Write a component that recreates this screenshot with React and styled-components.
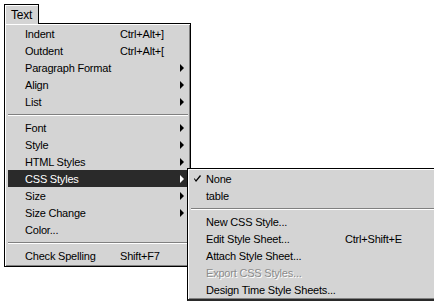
import React from 'react';
import styled, { createGlobalStyle } from 'styled-components';

const Global = createGlobalStyle`
  body {
    margin: 0;
    background: #ffffff;
    font-family: "Liberation Sans", Arial, sans-serif;
    font-size: 11px;
    letter-spacing: -0.2px;
    color: #000;
  }
`

const Page = styled.div`
  padding: 4px 0 0 4px;
  width: 434px;
  height: 307px;
  box-sizing: border-box;
`

const MenuWrap = styled.div`
  width: 187px;
  display: flex;
  flex-direction: column;
`

const Tab = styled.div`
  position: relative;
  z-index: 1;
  width: 35px;
  height: 20px;
  margin-bottom: -1px;
  box-sizing: border-box;
  background: #d4d4d4;
  border: 1px solid #000;
  border-bottom: none;
  box-shadow: inset 1px 1px #fff;
  padding: 3px 0 0 6px;
  font-size: 12px;
`

const Menu = styled.div`
  background: #d4d4d4;
  border: 1px solid #000;
  box-shadow: inset 1px 1px #fff, inset -1px -1px #808080;
  padding: 1px 2px 2px 3px;
  display: flex;
  flex-direction: column;
`

const Flyout = styled.div`
  position: absolute;
  left: 179px;
  top: -2px;
  width: 243px;
  z-index: 2;
  background: #d4d4d4;
  border: 1px solid #000;
  border-right: 2px solid #2a2a2a;
  border-bottom: 2px solid #2a2a2a;
  box-shadow: inset 1px 1px #fff, inset -1px -1px #808080;
  padding: 1px 2px 1px 3px;
  display: flex;
  flex-direction: column;
`

const Item = styled.div`
  position: relative;
  height: 17px;
  display: grid;
  grid-template-columns: ${p => p.$label}px 1fr 8px;
  align-items: center;
  padding-left: ${p => p.$indent}px;
  background: ${p => (p.$active ? '#2a2a2a' : 'transparent')};
  color: ${p => (p.$active ? '#fff' : p.$disabled ? '#8c8c8c' : '#000')};
  text-shadow: ${p => (p.$disabled ? '1px 1px 0 #fff' : 'none')};
  white-space: nowrap;
`

const Check = styled.span`
  position: absolute;
  left: 3px;
  top: 5px;
  display: flex;
`

const Arrow = styled.span`
  width: 0;
  height: 0;
  border-top: 4px solid transparent;
  border-bottom: 4px solid transparent;
  border-left: 4px solid ${p => (p.$active ? '#fff' : '#000')};
`

const Separator = styled.div`
  height: 9px;
  display: flex;
  align-items: center;
  &::after {
    content: '';
    flex: 1;
    height: 1px;
    background: #808080;
    border-bottom: 1px solid #fff;
  }
`

const mainItems = [
  { label: 'Indent', key: 'Ctrl+Alt+]' },
  { label: 'Outdent', key: 'Ctrl+Alt+[' },
  { label: 'Paragraph Format', sub: true },
  { label: 'Align', sub: true },
  { label: 'List', sub: true },
  { sep: true },
  { label: 'Font', sub: true },
  { label: 'Style', sub: true },
  { label: 'HTML Styles', sub: true },
  { label: 'CSS Styles', sub: true, active: true },
  { label: 'Size', sub: true },
  { label: 'Size Change', sub: true },
  { label: 'Color...' },
  { sep: true },
  { label: 'Check Spelling', key: 'Shift+F7' },
]

const cssItems = [
  { label: 'None', checked: true },
  { label: 'table' },
  { sep: true },
  { label: 'New CSS Style...' },
  { label: 'Edit Style Sheet...', key: 'Ctrl+Shift+E' },
  { label: 'Attach Style Sheet...' },
  { label: 'Export CSS Styles...', disabled: true },
  { label: 'Design Time Style Sheets...' },
]

const CheckMark = () => (
  <Check>
    <svg width="7" height="7" viewBox="0 0 7 7">
      <path d="M0 3 L2 5 L6 0 L7 1 L2 7 L0 4 Z" fill="#000" />
    </svg>
  </Check>
)

const SubMenu = () => (
  <Flyout>
    {cssItems.map((it, i) =>
      it.sep ? (
        <Separator key={i} />
      ) : (
        <Item key={i} $label={139} $indent={15} $disabled={it.disabled}>
          {it.checked && <CheckMark />}
          <span>{it.label}</span>
          <span>{it.key}</span>
          <span />
        </Item>
      )
    )}
  </Flyout>
)

export default function App() {
  return (
    <Page>
      <Global />
      <MenuWrap>
        <Tab>Text</Tab>
        <Menu>
          {mainItems.map((it, i) =>
            it.sep ? (
              <Separator key={i} />
            ) : (
              <Item key={i} $label={95} $indent={17} $active={it.active}>
                <span>{it.label}</span>
                <span>{it.key}</span>
                {it.sub ? <Arrow $active={it.active} /> : <span />}
                {it.active && <SubMenu />}
              </Item>
            )
          )}
        </Menu>
      </MenuWrap>
    </Page>
  );
}
